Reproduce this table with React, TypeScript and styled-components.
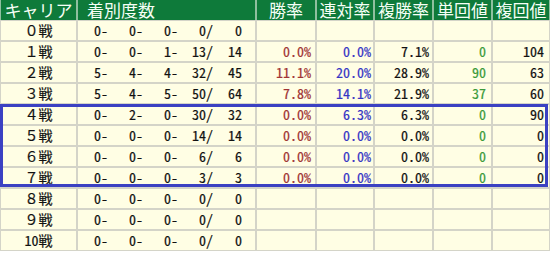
import React from "react";
import styled, { createGlobalStyle } from "styled-components";

const Global = createGlobalStyle`
  html, body { margin: 0; padding: 0; background: #ffffff; }
  body { font-family: "Noto Sans Mono CJK JP", "Noto Sans CJK JP", "DejaVu Sans Mono", monospace; }
`;

const Wrap = styled.div`
  position: relative;
  width: 550px;
`;

const Grid = styled.div`
  display: grid;
  grid-template-columns: 77px 179px 60px 58px 59px 59px 58px;
  grid-template-rows: 20px repeat(11, 21px);
`;

const Head = styled.div<{ $align?: "left" | "center" }>`
  box-sizing: border-box;
  background: #0e7a3a;
  color: #f6fff6;
  font-size: 17px;
  line-height: 20px;
  height: 20px;
  border-left: 1px solid #8fbf9f;
  border-right: 1px solid #8fbf9f;
  text-align: ${(p) => (p.$align === "left" ? "left" : "center")};
  padding-left: ${(p) => (p.$align === "left" ? "9px" : "0")};
  white-space: nowrap;
`;

const Cell = styled.div<{ $color?: string; $align?: "center" | "right"; $pr?: number }>`
  box-sizing: border-box;
  background: #fffee4;
  border: 1px solid #d4d4c8;
  color: ${(p) => p.$color ?? "#111"};
  font-size: 14px;
  line-height: 19px;
  height: 21px;
  text-align: ${(p) => p.$align ?? "right"};
  padding-right: ${(p) => (p.$pr ?? 0)}px;
  white-space: nowrap;
  -webkit-text-stroke: 0.2px ${(p) => p.$color ?? "#111"};
`;

const Tally = styled.div`
  box-sizing: border-box;
  background: #fffee4;
  border: 1px solid #d4d4c8;
  color: #111;
  font-size: 14px;
  line-height: 19px;
  height: 21px;
  display: flex;
  white-space: nowrap;
  -webkit-text-stroke: 0.2px #111;
`;

const Part = styled.span<{ $w: number }>`
  display: inline-block;
  width: ${(p) => p.$w}px;
  text-align: right;
`;

const Highlight = styled.div`
  position: absolute;
  left: 0;
  top: 104px;
  width: 548px;
  height: 83px;
  box-sizing: border-box;
  border: 3px solid #3b41c2;
  pointer-events: none;
`;

type Row = {
  label: string;
  t: [number, number, number, number, number];
  win?: string;
  ren?: string;
  fuku?: string;
  tan?: string;
  fret?: string;
};

const rows: Row[] = [
  { label: "０戦", t: [0, 0, 0, 0, 0] },
  { label: "１戦", t: [0, 0, 1, 13, 14], win: "0.0%", ren: "0.0%", fuku: "7.1%", tan: "0", fret: "104" },
  { label: "２戦", t: [5, 4, 4, 32, 45], win: "11.1%", ren: "20.0%", fuku: "28.9%", tan: "90", fret: "63" },
  { label: "３戦", t: [5, 4, 5, 50, 64], win: "7.8%", ren: "14.1%", fuku: "21.9%", tan: "37", fret: "60" },
  { label: "４戦", t: [0, 2, 0, 30, 32], win: "0.0%", ren: "6.3%", fuku: "6.3%", tan: "0", fret: "90" },
  { label: "５戦", t: [0, 0, 0, 14, 14], win: "0.0%", ren: "0.0%", fuku: "0.0%", tan: "0", fret: "0" },
  { label: "６戦", t: [0, 0, 0, 6, 6], win: "0.0%", ren: "0.0%", fuku: "0.0%", tan: "0", fret: "0" },
  { label: "７戦", t: [0, 0, 0, 3, 3], win: "0.0%", ren: "0.0%", fuku: "0.0%", tan: "0", fret: "0" },
  { label: "８戦", t: [0, 0, 0, 0, 0] },
  { label: "９戦", t: [0, 0, 0, 0, 0] },
  { label: "10戦", t: [0, 0, 0, 0, 0] },
];

export default function App() {
  return (
    <>
      <Global />
      <Wrap>
        <Grid>
          <Head>キャリア</Head>
          <Head $align="left">着別度数</Head>
          <Head>勝率</Head>
          <Head>連対率</Head>
          <Head>複勝率</Head>
          <Head>単回値</Head>
          <Head>複回値</Head>
          {rows.map((r) => (
            <React.Fragment key={r.label}>
              <Cell $align="center">{r.label}</Cell>
              <Tally>
                <Part $w={30}>{r.t[0]}-</Part>
                <Part $w={35}>{r.t[1]}-</Part>
                <Part $w={35}>{r.t[2]}-</Part>
                <Part $w={35}>{r.t[3]}/</Part>
                <Part $w={29}>{r.t[4]}</Part>
              </Tally>
              <Cell $color="#a03434" $pr={4}>{r.win ?? ""}</Cell>
              <Cell $color="#3434c4" $pr={2}>{r.ren ?? ""}</Cell>
              <Cell $color="#111" $pr={3}>{r.fuku ?? ""}</Cell>
              <Cell $color="#3a9a3a" $pr={5}>{r.tan ?? ""}</Cell>
              <Cell $color="#111" $pr={5}>{r.fret ?? ""}</Cell>
            </React.Fragment>
          ))}
        </Grid>
        <Highlight />
      </Wrap>
    </>
  );
}
